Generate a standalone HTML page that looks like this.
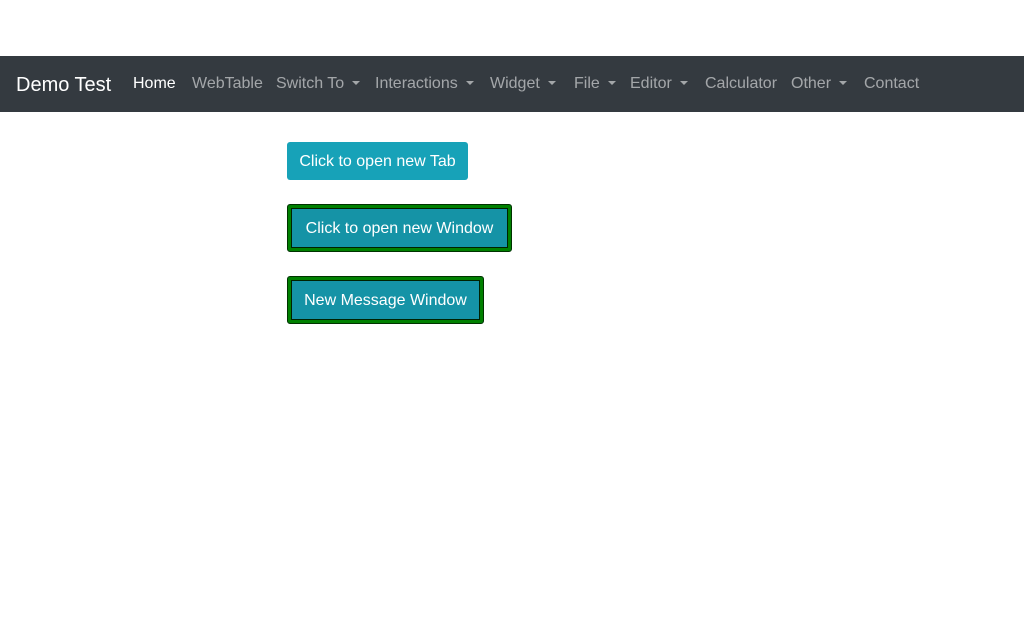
<!DOCTYPE html>
<html><head><style>
body{margin:0;width:1024px;height:644px;background:#fff;font-family:"Liberation Sans",sans-serif;position:relative;overflow:hidden}
nav{position:absolute;top:56px;left:0;width:1024px;height:56px;background:#343a40}
nav span{position:absolute;top:19px;font-size:16px;color:rgba(255,255,255,.55);white-space:nowrap}
nav span.c::after{content:"";display:inline-block;margin-left:8px;vertical-align:3px;border-top:4px solid rgba(255,255,255,.55);border-left:4px solid transparent;border-right:4px solid transparent}
.b{position:absolute;left:287px;background:#17a2b8;color:#fff;font-size:16px;display:flex;align-items:center;justify-content:center;border-radius:3px;box-sizing:border-box;padding-top:2px}
.g{background:#1593a6;border:1px solid #003300;box-shadow:inset 0 0 0 3px #008000,inset 0 0 0 4px #002200}
</style></head><body>
<nav>
<span style="left:16px;top:18px;font-size:20px;color:#fff">Demo Test</span>
<span style="left:133px;color:#fff">Home</span>
<span style="left:192px">WebTable</span>
<span class="c" style="left:276px">Switch To</span>
<span class="c" style="left:375px">Interactions</span>
<span class="c" style="left:490px">Widget</span>
<span class="c" style="left:574px">File</span>
<span class="c" style="left:630px">Editor</span>
<span style="left:705px">Calculator</span>
<span class="c" style="left:791px">Other</span>
<span style="left:864px">Contact</span>
</nav>
<div class="b" style="top:142px;width:181px;height:38px">Click to open new Tab</div>
<div class="b g" style="top:204px;width:225px;height:48px">Click to open new Window</div>
<div class="b g" style="top:276px;width:197px;height:48px">New Message Window</div>
</body></html>
